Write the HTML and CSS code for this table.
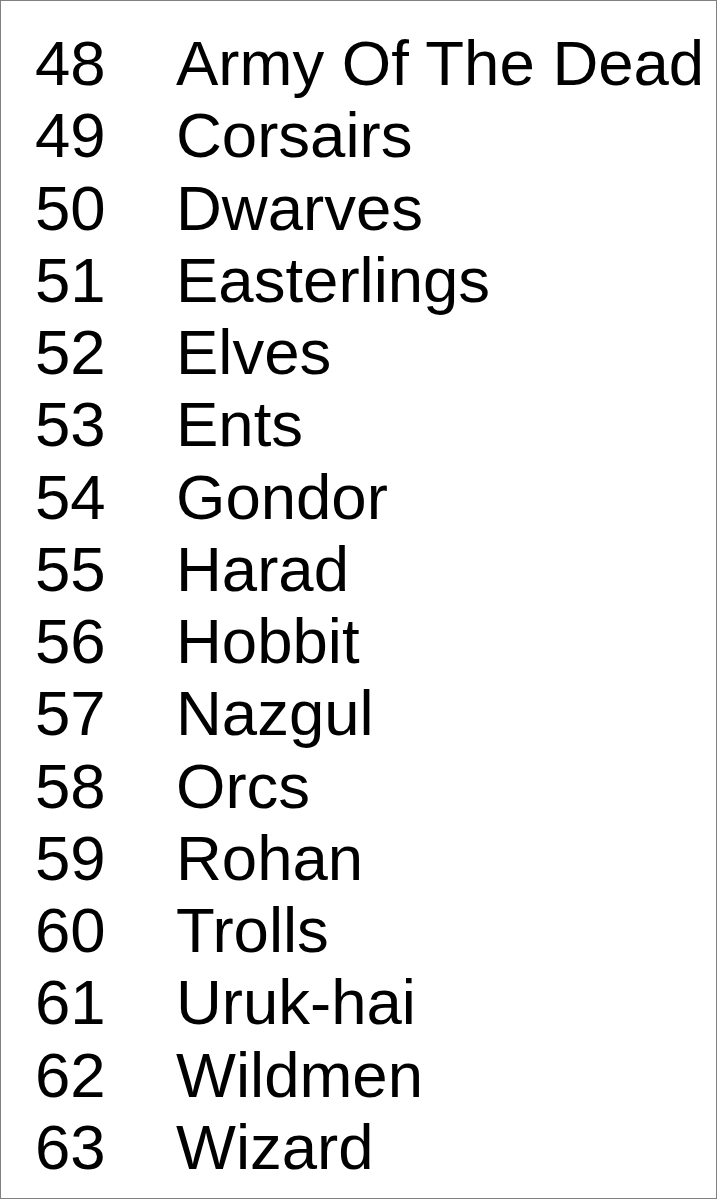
FILE: index.html
```html
<!DOCTYPE html>
<html lang="en">
<head>
<meta charset="utf-8">
<title>Factions</title>
<link rel="stylesheet" href="styles.css">
</head>
<body>
<div class="frame">
  <ul class="list">
    <li class="row"><span class="num">48</span><span class="name">Army Of The Dead</span></li>
    <li class="row"><span class="num">49</span><span class="name">Corsairs</span></li>
    <li class="row"><span class="num">50</span><span class="name">Dwarves</span></li>
    <li class="row"><span class="num">51</span><span class="name">Easterlings</span></li>
    <li class="row"><span class="num">52</span><span class="name">Elves</span></li>
    <li class="row"><span class="num">53</span><span class="name">Ents</span></li>
    <li class="row"><span class="num">54</span><span class="name">Gondor</span></li>
    <li class="row"><span class="num">55</span><span class="name">Harad</span></li>
    <li class="row"><span class="num">56</span><span class="name">Hobbit</span></li>
    <li class="row"><span class="num">57</span><span class="name">Nazgul</span></li>
    <li class="row"><span class="num">58</span><span class="name">Orcs</span></li>
    <li class="row"><span class="num">59</span><span class="name">Rohan</span></li>
    <li class="row"><span class="num">60</span><span class="name">Trolls</span></li>
    <li class="row"><span class="num">61</span><span class="name">Uruk-hai</span></li>
    <li class="row"><span class="num">62</span><span class="name">Wildmen</span></li>
    <li class="row"><span class="num">63</span><span class="name">Wizard</span></li>
  </ul>
</div>
</body>
</html>
```

FILE: styles.css
```css
html, body {
  margin: 0;
  padding: 0;
  background: #ffffff;
}

.frame {
  box-sizing: border-box;
  width: 717px;
  height: 1199px;
  border: 1px solid #808080;
  padding: 26px 0 0 34px;
  font-family: "Liberation Sans", Arial, sans-serif;
  font-size: 63.5px;
  line-height: 72.27px;
  color: #000000;
}

.list {
  list-style: none;
  margin: 0;
  padding: 0;
}

.row {
  display: grid;
  grid-template-columns: 141px auto;
  white-space: nowrap;
}
```
